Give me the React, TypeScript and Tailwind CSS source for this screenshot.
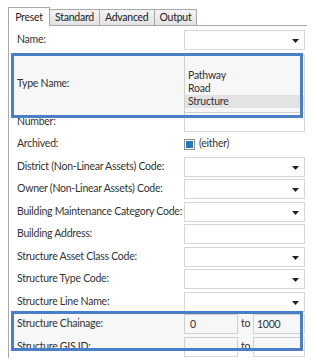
import React from 'react';

const font = { fontFamily: '"Segoe UI", Lato, "Noto Sans", sans-serif' };

const Caret: React.FC = () => (
  <svg width="7" height="4" viewBox="0 0 7 4" className="absolute right-[5px] top-[8px]">
    <path d="M0 0h7L3.5 4z" fill="#222" />
  </svg>
);

const Field: React.FC<{ kind: 'select' | 'text' }> = ({ kind }) => (
  <div className="relative h-[20px] w-[121px] border border-[#d6d6d6] bg-white">
    {kind === 'select' && <Caret />}
  </div>
);

const Row: React.FC<{ label: string; children?: React.ReactNode }> = ({ label, children }) => (
  <div className="flex h-[22.5px] items-center">
    <div className="w-[175px] shrink-0 whitespace-nowrap pl-[8px]">{label}</div>
    {children}
  </div>
);

const tabs = ['Standard', 'Advanced', 'Output'];

export default function App() {
  return (
    <div
      className="relative h-[363px] w-[317px] overflow-hidden bg-white text-[10.5px] tracking-[-0.25px] text-[#333]"
      style={font}
    >
      {/* tabs */}
      <div className="flex items-end pl-[8px] pt-[7px]">
        <div className="relative z-10 -mb-px h-[19px] w-[42px] border border-b-0 border-[#a9a9a9] bg-white text-center leading-[18px] text-[#222]">
          Preset
        </div>
        {tabs.map((t) => (
          <div
            key={t}
            className="h-[16px] border border-b-0 border-l-0 border-[#a9a9a9] bg-gradient-to-b from-[#f3f3f3] to-[#e3e3e3] px-[5px] leading-[15px] text-[#222]"
          >
            {t}
          </div>
        ))}
      </div>

      {/* panel */}
      <div className="ml-[8px] w-[299px] border-l border-t border-[#a9a9a9] bg-white pt-[3px]">
        <Row label="Name:">
          <Field kind="select" />
        </Row>

        <div className="flex h-[59px] items-center">
          <div className="w-[175px] shrink-0 pl-[8px] pt-[5px]">Type Name:</div>
          <div className="mt-[6px] flex h-[58px] w-[121px] flex-col justify-end border border-[#d6d6d6] bg-white pb-[4px] leading-[13px]">
            <div className="px-[3px]">Pathway</div>
            <div className="px-[3px]">Road</div>
            <div className="bg-[#ebebeb] px-[3px]">Structure</div>
          </div>
        </div>

        <Row label="Number:">
          <Field kind="text" />
        </Row>
        <Row label="Archived:">
          <div className="flex items-center gap-[4px]">
            <div className="flex h-[11px] w-[11px] items-center justify-center border border-[#8f8f8f] bg-white">
              <div className="h-[7px] w-[7px] bg-[#2b76b8]" />
            </div>
            <span>(either)</span>
          </div>
        </Row>
        <Row label="District (Non-Linear Assets) Code:">
          <Field kind="select" />
        </Row>
        <Row label="Owner (Non-Linear Assets) Code:">
          <Field kind="select" />
        </Row>
        <Row label="Building Maintenance Category Code:">
          <Field kind="select" />
        </Row>
        <Row label="Building Address:">
          <Field kind="text" />
        </Row>
        <Row label="Structure Asset Class Code:">
          <Field kind="select" />
        </Row>
        <Row label="Structure Type Code:">
          <Field kind="select" />
        </Row>
        <Row label="Structure Line Name:">
          <Field kind="select" />
        </Row>
        <Row label="Structure Chainage:">
          <div className="flex items-center">
            <div className="h-[20px] w-[54px] border border-[#d6d6d6] bg-white pl-[5px] leading-[18px]">0</div>
            <span className="w-[15px] pl-[3px]">to</span>
            <div className="h-[20px] w-[52px] border border-[#d6d6d6] bg-white pl-[3px] leading-[18px]">1000</div>
          </div>
        </Row>
        <Row label="Structure GIS ID:">
          <div className="flex items-center">
            <div className="h-[20px] w-[54px] border border-[#d6d6d6] bg-white" />
            <span className="w-[15px] pl-[3px]">to</span>
            <div className="h-[20px] w-[52px] border border-[#d6d6d6] bg-white" />
          </div>
        </Row>
      </div>

      {/* highlight boxes */}
      <div className="absolute left-[11px] top-[53px] h-[65px] w-[292px] border-[3px] border-[#4a7fc8] bg-black/[0.03]" />
      <div className="absolute left-[11px] top-[311px] h-[40px] w-[292px] border-[3px] border-[#4a7fc8] bg-black/[0.03]" />
    </div>
  );
}
